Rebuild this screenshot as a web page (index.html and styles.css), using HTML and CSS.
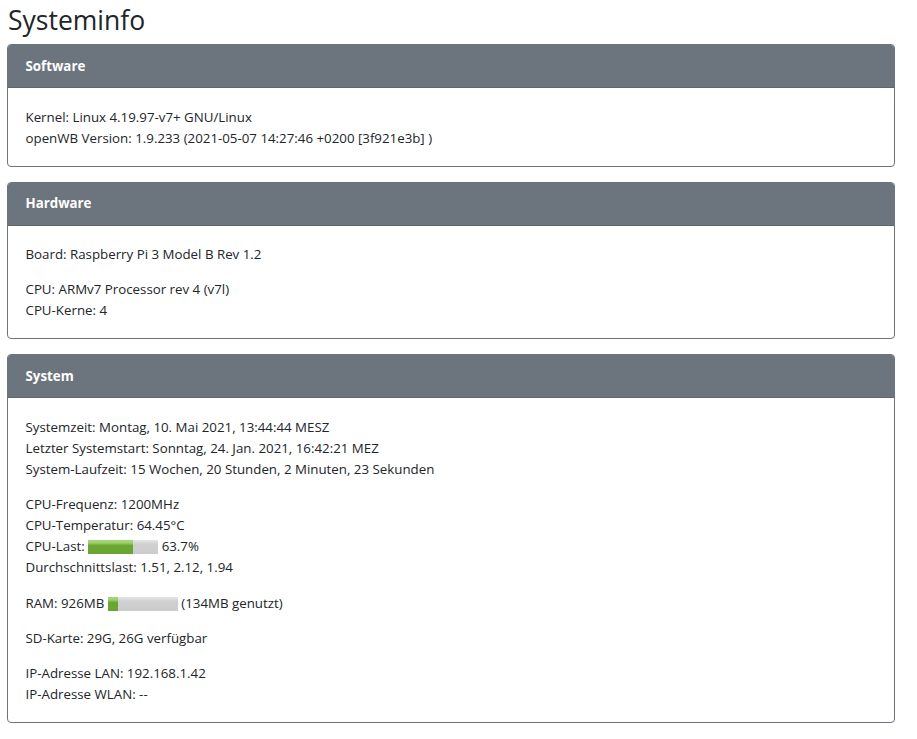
FILE: index.html
```html
<!DOCTYPE html>
<html lang="de">
<head>
    <meta charset="UTF-8">
    <meta name="viewport" content="width=device-width, initial-scale=1.0">
    <title>Systeminfo</title>
    <link rel="stylesheet" href="styles.css">
</head>
<body>

<div class="container">
    <h1>Systeminfo</h1>

    <div class="card">
        <div class="card-header">Software</div>
        <div class="card-body">
            <p>
                Kernel: Linux 4.19.97-v7+ GNU/Linux<br>
                openWB Version: 1.9.233 (2021-05-07 14:27:46 +0200 [3f921e3b] )
            </p>
        </div>
    </div>

    <div class="card">
        <div class="card-header">Hardware</div>
        <div class="card-body">
            <p>Board: Raspberry Pi 3 Model B Rev 1.2</p>
            <p>
                CPU: ARMv7 Processor rev 4 (v7l)<br>
                CPU-Kerne: 4
            </p>
        </div>
    </div>

    <div class="card">
        <div class="card-header">System</div>
        <div class="card-body">
            <p>
                Systemzeit: Montag, 10. Mai 2021, 13:44:44 MESZ<br>
                Letzter Systemstart: Sonntag, 24. Jan. 2021, 16:42:21 MEZ<br>
                System-Laufzeit: 15 Wochen, 20 Stunden, 2 Minuten, 23 Sekunden
            </p>
            <p>
                CPU-Frequenz: 1200MHz<br>
                CPU-Temperatur: 64.45°C<br>
                CPU-Last: <span class="meter"><span class="meter-fill" style="width: 63.7%"></span></span> 63.7%<br>
                Durchschnittslast: 1.51, 2.12, 1.94
            </p>
            <p class="ram-line">
                RAM: 926MB <span class="meter"><span class="meter-fill" style="width: 14.5%"></span></span> (134MB genutzt)
            </p>
            <p>SD-Karte: 29G, 26G verfügbar</p>
            <p>
                IP-Adresse LAN: 192.168.1.42<br>
                IP-Adresse WLAN: --
            </p>
        </div>
    </div>
</div>

</body>
</html>
```

FILE: styles.css
```css
html {
    font-size: 14px;
}

body {
    font-family: 'Open Sans', 'Noto Sans', sans-serif;
    font-size: 13.3px;
    line-height: 21px;
    color: #212529;
    background-color: #ffffff;
    margin: 0;
    padding: 0;
}

.container {
    width: 888px;
    padding: 0 7px;
}

h1 {
    font-size: 26.5px;
    font-weight: 400;
    line-height: 34px;
    margin: 3px 0 7px 1px;
}

.card {
    border: 1px solid #6c757d;
    border-radius: 4px;
    margin-bottom: 15px;
    overflow: hidden;
}

.card-header {
    background-color: #6c757d;
    color: #ffffff;
    font-weight: 700;
    padding: 10.5px 17.5px;
    border-bottom: 1px solid #5f666d;
}

.card-body {
    padding: 18.5px 17.5px 17px;
}

.card-body p {
    margin: 0 0 14px 0;
}

.card-body p:last-child {
    margin-bottom: 0;
}

.ram-line {
    line-height: 22px;
}

.meter {
    display: inline-block;
    width: 70px;
    height: 14px;
    vertical-align: -3px;
    background: linear-gradient(#e6e6e6, #d0d0d0 30%, #cccccc);
}

.meter-fill {
    display: block;
    height: 100%;
    background: linear-gradient(#a8d57a, #a0d070 20%, #6aa632 40%, #6aa632);
}
```
